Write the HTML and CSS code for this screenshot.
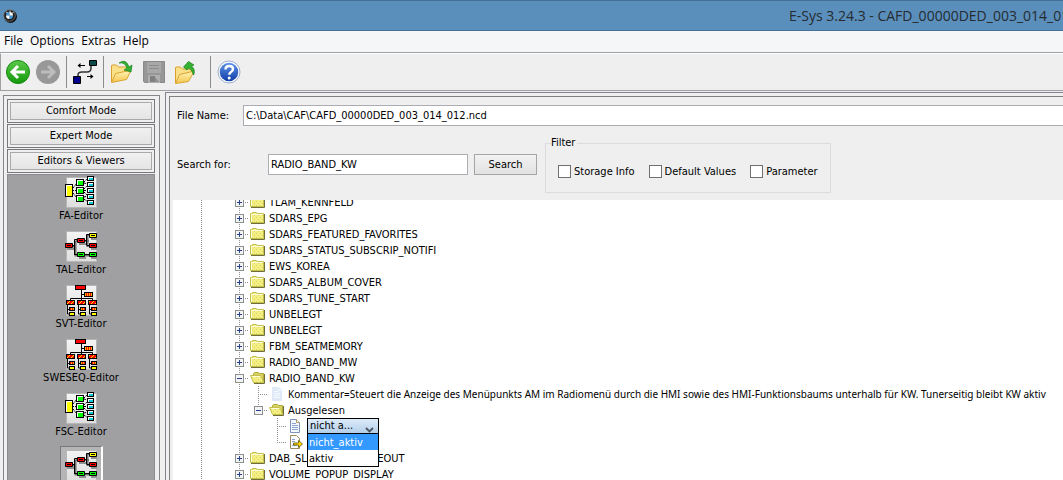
FILE: index.html
```html
<!DOCTYPE html>
<html lang="en">
<head>
<meta charset="utf-8">
<title>E-Sys 3.24.3</title>
<link rel="stylesheet" href="styles.css">
</head>
<body>
<svg class="defs" aria-hidden="true">
  <defs>
    <linearGradient id="leaf" x1="0" y1="0" x2="0" y2="1"><stop offset="0" stop-color="#5cc84a"/><stop offset="1" stop-color="#149a0c"/></linearGradient>
    <linearGradient id="gold" x1="0" y1="0" x2="0" y2="1"><stop offset="0" stop-color="#fff3b8"/><stop offset="1" stop-color="#f5c64d"/></linearGradient>
    <linearGradient id="blue" x1="0" y1="0" x2="0" y2="1"><stop offset="0" stop-color="#5e92e8"/><stop offset="1" stop-color="#123ea8"/></linearGradient>
    <linearGradient id="tile" x1="0" y1="0" x2="0" y2="1"><stop offset="0" stop-color="#f4f4f4"/><stop offset="1" stop-color="#dedede"/></linearGradient>
    <pattern id="hatch" width="4" height="4" patternUnits="userSpaceOnUse"><rect width="4" height="4" fill="#f00"/><path d="M0 4L4 0M-1 1L1 -1M3 5L5 3" stroke="#ffe800" stroke-width="1"/></pattern>
    <pattern id="dots" width="2" height="2" patternUnits="userSpaceOnUse"><rect width="2" height="2" fill="#f5b400"/><rect width="1" height="2" fill="#f00"/></pattern>
    <pattern id="grain" width="4" height="4" patternUnits="userSpaceOnUse"><rect width="4" height="4" fill="#f3ef84"/><path d="M0 0h1v1H0zM2 2h1v1H2z" fill="#e2d45a"/></pattern>
  </defs>
  <symbol id="ed-fa" viewBox="0 0 34 34">
    <rect x="2.500" y="2.500" width="30" height="30" fill="url(#tile)" stroke="#b6b6b6"/>
    <path d="M8 15.500h5M9 13l4-5M9 18l4 5M20 7l4-4M20 8l4 1M20 15.500h4M20 14l4-4M20 22l4-1M20 24l4 3M20 17l4 4" stroke="#000" stroke-dasharray="2 1" fill="none"/>
    <rect x="1.500" y="9.500" width="7" height="12" fill="#ff0" stroke="#000"/>
    <path d="M2.500 21V10.500H8" stroke="#fff" fill="none"/>
    <g fill="#0f0" stroke="#000"><rect x="12.500" y="4.500" width="7" height="6"/><rect x="12.500" y="12.500" width="7" height="6"/><rect x="12.500" y="20.500" width="7" height="6"/></g>
    <path d="M13.500 10V5.500H19M13.500 18V13.500H19M13.500 26V21.500H19" stroke="#fff" fill="none"/>
    <g fill="#fff" stroke="#000"><rect x="23.500" y="1.500" width="6" height="4"/><rect x="23.500" y="7.500" width="6" height="4"/><rect x="23.500" y="13.500" width="6" height="4"/><rect x="23.500" y="19.500" width="6" height="4"/><rect x="23.500" y="25.500" width="6" height="4"/></g>
    <path d="M25 4h4M25 10h4M25 16h4M25 22h4M25 28h4" stroke="#12c8d4" stroke-width="2"/>
  </symbol>
  <symbol id="ed-tal" viewBox="0 0 34 34">
    <rect x="2.500" y="2.500" width="30" height="30" fill="url(#tile)" stroke="#b6b6b6"/>
    <path d="M9 17.500h3M11.500 12v14.500H14M11.500 12H14M21 12h4M23.500 6v11H26M23.500 6H26M21 26.500h5" stroke="#707070" stroke-width="2" fill="none"/>
    <path d="M8 16.500h3M10.500 25V10.500H13M10 25.500h3M20 11.500h3M22.500 16V5.500H25M20 25.500h5M22.500 16.500H25" stroke="#000" fill="none"/>
    <path d="M3 20h7M15 15h7M27 10h6M27 20h6M15 29h7M27 29h6" stroke="#909090" stroke-width="2"/>
    <g stroke="#000"><path d="M1.500 14.500h7v4h-7zM13.500 9.500h7v4h-7zM25.500 14.500h7v4h-7z" fill="#f00"/><path d="M25.500 4.500h7v4h-7z" fill="#ff0"/><path d="M13.500 23.500h7v4h-7zM25.500 23.500h7v4h-7z" fill="#0f0"/><path d="M3 16.500h4M15 11.500h4M27 6.500h4M27 16.500h4M15 25.500h4M27 25.500h4"/></g>
  </symbol>
  <symbol id="ed-svt" viewBox="0 0 34 34">
    <rect x="2.500" y="2.500" width="30" height="30" fill="url(#tile)" stroke="#b6b6b6"/>
    <path d="M17.500 7v11M17.500 11.500h4M6.500 18v-2.500h22V18M3.500 22v9H6M3.500 26.500H6M14.500 22v9H17M14.500 26.500H17M25.500 22v9H28M25.500 26.500H28" stroke="#000" fill="none"/>
    <rect x="11.500" y="2.500" width="10" height="4" fill="#f00" stroke="#000"/>
    <g fill="url(#dots)" stroke="#000"><rect x="20.500" y="9.500" width="8" height="4"/><rect x="5.500" y="24.500" width="5" height="3"/><rect x="16.500" y="24.500" width="5" height="3"/><rect x="27.500" y="24.500" width="5" height="3"/></g>
    <g fill="url(#hatch)" stroke="#000"><rect x="2.500" y="17.500" width="8" height="4"/><rect x="13.500" y="17.500" width="8" height="4"/><rect x="24.500" y="17.500" width="8" height="4"/></g>
    <g fill="#ff0" stroke="#000"><rect x="5.500" y="29.500" width="5" height="3"/><rect x="16.500" y="29.500" width="5" height="3"/><rect x="27.500" y="29.500" width="5" height="3"/></g>
  </symbol>
  <symbol id="folder" viewBox="0 0 15 14">
    <path d="M1 12.500h13.500V3" stroke="#6f6d38" fill="none"/>
    <path d="M.5 11.500v-9h1l1-1h4l1 1h6v9z" fill="url(#grain)" stroke="#c4c04c"/>
    <path d="M1.500 11V3.500H13" stroke="#fffde0" fill="none"/>
  </symbol>
  <symbol id="folder-open" viewBox="0 0 15 14">
    <path d="M3.500 10V2.500l1-1h4l1 1h4v9" fill="#d8d060" stroke="#b0aa3c"/>
    <path d="M14.500 3v9.500H4" stroke="#6f6d38" fill="none"/>
    <path d="M.5 4.500h9.500l1.500 1 2 6H3.500z" fill="url(#grain)" stroke="#c4c04c"/>
    <path d="M2 5.500h8" stroke="#fffde0"/>
  </symbol>
  <symbol id="page" viewBox="0 0 15 14">
    <path d="M2.500.5h6l3 3v10h-9z" fill="#f4f8ff" stroke="#7d93b8"/>
    <path d="M8.500.5v3h3" fill="#fff" stroke="#b99a55"/>
    <path d="M4 4.500h4M4 6.500h6M4 8.500h6M4 10.500h6" stroke="#8aa2cc"/>
  </symbol>
  <symbol id="page-faded" viewBox="0 0 15 14">
    <path d="M3 0h7l3 3v11H3z" fill="#dfe9f8"/>
    <path d="M9.500 0v3.500H13" fill="none" stroke="#f4f8ff"/>
    <path d="M5 4.500h4M5 6.500h6M5 8.500h6M5 10.500h6" stroke="#f6faff"/>
  </symbol>
  <symbol id="plus" viewBox="0 0 9 9"><rect x=".5" y=".5" width="8" height="8" fill="#f4f4f4" stroke="#8e8f8f"/><path d="M2 4.500h5M4.500 2v5" stroke="#28418c"/></symbol>
  <symbol id="minus" viewBox="0 0 9 9"><rect x=".5" y=".5" width="8" height="8" fill="#f4f4f4" stroke="#8e8f8f"/><path d="M2 4.500h5" stroke="#28418c"/></symbol>
</svg>

<header class="titlebar">
  <svg class="logo" viewBox="0 0 14 14" role="img" aria-label="BMW"><circle cx="7.500" cy="7.500" r="6.500" fill="#111"/><circle cx="6.500" cy="6.500" r="5.800" fill="#222" stroke="#777" stroke-width=".8"/><path d="M3 3l2 1M7 1.500v2M10.500 3L9 4.500" stroke="#ddd"/><path d="M6.500 6.500V3A3.500 3.500 0 0 0 3 6.500zM6.500 6.500V10A3.500 3.500 0 0 0 10 6.500z" fill="#3d9be0"/><path d="M6.500 6.500V3A3.500 3.500 0 0 1 10 6.500zM6.500 6.500V10A3.500 3.500 0 0 1 3 6.500z" fill="#fff"/></svg>
  <h1 class="caption">E-Sys 3.24.3 - CAFD_00000DED_003_014_012.ncd</h1>
</header>

<nav class="menubar">
  <button class="menu">File</button>
  <button class="menu">Options</button>
  <button class="menu">Extras</button>
  <button class="menu">Help</button>
</nav>

<div class="toolbar">
  <button class="tool" aria-label="Back"><svg viewBox="0 0 24 24"><circle cx="12" cy="12" r="11.500" fill="url(#leaf)" stroke="#138a10"/><path d="M19 12H7M12 6l-6 6 6 6" stroke="#fff" stroke-width="3" fill="none"/></svg></button>
  <button class="tool" aria-label="Forward" disabled><svg viewBox="0 0 24 24"><circle cx="12" cy="12" r="12" fill="#989898"/><path d="M5 12h12M12 6l6 6-6 6" stroke="#bcbcbc" stroke-width="3" fill="none"/></svg></button>
  <span class="sep"></span>
  <button class="tool" aria-label="Connect"><svg viewBox="0 0 24 24"><path d="M5 18v-3q0-3 4-3h5q4 0 4-4V6" stroke="#333" stroke-width="1.500" fill="none"/><path d="M16.500.5h7v5h-7z" fill="#0a4c4c" stroke="#000"/><path d="M.5 16.500h7v7h-7z" fill="#00008c" stroke="#000"/><path d="M6 5.500h6M14 16.500h5" stroke="#000"/><path d="M4.500 5.500l3-2.500v5zM20.500 16.500l-3-2.500v5z"/></svg></button>
  <span class="sep"></span>
  <div class="filegroup">
    <button class="tool" aria-label="Open"><svg viewBox="0 0 24 24"><path d="M1.500 22V6q0-1 1-1h4l2 2h9v4" fill="#fbe08a" stroke="#d9a12c"/><path d="M1.500 22.500l4-9 14-3 1 1-4 8z" fill="url(#gold)" stroke="#dba52e"/><path d="M9 3q7-5 10 4l3-2-1 7-7-2 3-2q-2-6-8-5z" fill="#35b030" stroke="#15801a" stroke-width=".7"/></svg></button>
    <button class="tool" aria-label="Save" disabled><svg viewBox="0 0 24 24"><path d="M1.500 1.500h21v21h-20l-1-1z" fill="#979797" stroke="#8a8a8a"/><path d="M5 2h14v11H5z" fill="#a8a8a8"/><path d="M7 5.500h10M7 8.500h10" stroke="#8c8c8c"/><path d="M6 15h12v8H6z" fill="#b0b0b0"/><path d="M8 16h5v6H8z" fill="#808080"/><path d="M13 22V17l4 5z" fill="#909090"/></svg></button>
    <button class="tool" aria-label="Export"><svg viewBox="0 0 24 24"><path d="M1.500 23V8q0-1 1-1h4l2 2h9v5" fill="#fbe08a" stroke="#d9a12c"/><path d="M1.500 23.500l4-9 13-3 1 1-5 9z" fill="url(#gold)" stroke="#dba52e"/><path d="M9.500 7l5-5.500L20 5l-2.500 1q4.500 4 2 9-1-5-5-7l-1.500 2z" fill="#35b030" stroke="#15801a" stroke-width=".7"/></svg></button>
  </div>
  <span class="sep"></span>
  <button class="tool" aria-label="Help"><svg viewBox="0 0 24 24"><circle cx="12" cy="12" r="11" fill="#fff" stroke="#9daed0"/><circle cx="12" cy="12" r="9.300" fill="url(#blue)"/><path d="M8.500 9.500q0-3.500 3.800-3.500 3.700 0 3.700 3 0 2-2 3-1.700 1-1.700 2.800" stroke="#fff" stroke-width="2.500" fill="none"/><circle cx="12.200" cy="18" r="1.500" fill="#fff"/></svg></button>
</div>

<main class="workspace">
  <aside class="sidebar">
    <button class="mode">Comfort Mode</button>
    <button class="mode">Expert Mode</button>
    <button class="mode">Editors &amp; Viewers</button>
    <div class="editors">
      <button class="editor"><svg><use href="#ed-fa"/></svg><span>FA-Editor</span></button>
      <button class="editor"><svg><use href="#ed-tal"/></svg><span>TAL-Editor</span></button>
      <button class="editor"><svg><use href="#ed-svt"/></svg><span>SVT-Editor</span></button>
      <button class="editor"><svg><use href="#ed-svt"/></svg><span>SWESEQ-Editor</span></button>
      <button class="editor"><svg><use href="#ed-fa"/></svg><span>FSC-Editor</span></button>
      <button class="editor active" aria-label="FDL-Editor"><svg><use href="#ed-tal"/></svg></button>
    </div>
  </aside>

  <section class="frame">
    <div class="panel">
      <form class="query">
        <div class="file-row">
          <label class="file-label" for="file">File Name:</label>
          <input class="field file" id="file" type="text" value="C:\Data\CAF\CAFD_00000DED_003_014_012.ncd">
        </div>
        <div class="search-row">
          <label class="search-label" for="search">Search for:</label>
          <input class="field search" id="search" type="text" value="RADIO_BAND_KW">
          <button class="go" type="button">Search</button>
          <fieldset class="filter">
            <legend>Filter</legend>
            <label class="check"><input type="checkbox">Storage Info</label>
            <label class="check"><input type="checkbox">Default Values</label>
            <label class="check"><input type="checkbox">Parameter</label>
          </fieldset>
        </div>
      </form>

      <div class="viewport">
        <ul class="tree">
          <li class="row"><i class="guide line"></i><i class="guide"></i><button class="guide line arm" aria-label="Expand"><svg><use href="#plus"/></svg></button><svg class="icon"><use href="#folder"/></svg>TLAM_KENNFELD</li>
          <li class="row"><i class="guide line"></i><i class="guide"></i><button class="guide line arm" aria-label="Expand"><svg><use href="#plus"/></svg></button><svg class="icon"><use href="#folder"/></svg>SDARS_EPG</li>
          <li class="row"><i class="guide line"></i><i class="guide"></i><button class="guide line arm" aria-label="Expand"><svg><use href="#plus"/></svg></button><svg class="icon"><use href="#folder"/></svg>SDARS_FEATURED_FAVORITES</li>
          <li class="row"><i class="guide line"></i><i class="guide"></i><button class="guide line arm" aria-label="Expand"><svg><use href="#plus"/></svg></button><svg class="icon"><use href="#folder"/></svg>SDARS_STATUS_SUBSCRIP_NOTIFI</li>
          <li class="row"><i class="guide line"></i><i class="guide"></i><button class="guide line arm" aria-label="Expand"><svg><use href="#plus"/></svg></button><svg class="icon"><use href="#folder"/></svg>EWS_KOREA</li>
          <li class="row"><i class="guide line"></i><i class="guide"></i><button class="guide line arm" aria-label="Expand"><svg><use href="#plus"/></svg></button><svg class="icon"><use href="#folder"/></svg>SDARS_ALBUM_COVER</li>
          <li class="row"><i class="guide line"></i><i class="guide"></i><button class="guide line arm" aria-label="Expand"><svg><use href="#plus"/></svg></button><svg class="icon"><use href="#folder"/></svg>SDARS_TUNE_START</li>
          <li class="row"><i class="guide line"></i><i class="guide"></i><button class="guide line arm" aria-label="Expand"><svg><use href="#plus"/></svg></button><svg class="icon"><use href="#folder"/></svg>UNBELEGT</li>
          <li class="row"><i class="guide line"></i><i class="guide"></i><button class="guide line arm" aria-label="Expand"><svg><use href="#plus"/></svg></button><svg class="icon"><use href="#folder"/></svg>UNBELEGT</li>
          <li class="row"><i class="guide line"></i><i class="guide"></i><button class="guide line arm" aria-label="Expand"><svg><use href="#plus"/></svg></button><svg class="icon"><use href="#folder"/></svg>FBM_SEATMEMORY</li>
          <li class="row"><i class="guide line"></i><i class="guide"></i><button class="guide line arm" aria-label="Expand"><svg><use href="#plus"/></svg></button><svg class="icon"><use href="#folder"/></svg>RADIO_BAND_MW</li>
          <li class="row"><i class="guide line"></i><i class="guide"></i><button class="guide line arm" aria-label="Collapse"><svg><use href="#minus"/></svg></button><svg class="icon"><use href="#folder-open"/></svg>RADIO_BAND_KW</li>
          <li class="row comment"><i class="guide line"></i><i class="guide"></i><i class="guide line"></i><i class="guide line arm"></i><svg class="icon"><use href="#page-faded"/></svg>Kommentar=Steuert die Anzeige des Menüpunkts AM im Radiomenü durch die HMI sowie des HMI-Funktionsbaums unterhalb für KW. Tunerseitig bleibt KW aktiv</li>
          <li class="row"><i class="guide line"></i><i class="guide"></i><i class="guide line"></i><button class="guide end" aria-label="Collapse"><svg><use href="#minus"/></svg></button><svg class="icon"><use href="#folder-open"/></svg>Ausgelesen</li>
          <li class="row"><i class="guide line"></i><i class="guide"></i><i class="guide line"></i><i class="guide"></i><i class="guide line arm"></i><svg class="icon"><use href="#page"/></svg>
            <div class="combo">
              <select class="value" aria-label="Wert"><option>nicht a...</option><option>aktiv</option></select>
              <svg class="chevron" viewBox="0 0 9 6"><path d="M1 1l3.500 3.500L8 1" fill="none" stroke="#4c535c" stroke-width="1.800"/></svg>
              <ul class="popup" role="listbox" aria-label="Wert">
                <li class="choice picked" role="option" aria-selected="true">nicht_aktiv</li>
                <li class="choice" role="option" aria-selected="false">aktiv</li>
              </ul>
            </div>
          </li>
          <li class="row"><i class="guide line"></i><i class="guide"></i><i class="guide line"></i><i class="guide"></i><i class="guide end"></i><svg class="icon" viewBox="0 0 15 14"><path d="M2.500.5h6l3 3v10h-9z" fill="#f8faff" stroke="#9b8a5c"/><path d="M4 4.500h3M4 6.500h3M4 10.500h5" stroke="#8aa2cc"/><path d="M5.500 8h5V5.500L14.500 9l-4 3.500V10h-5z" fill="#ffd900" stroke="#5e5000" stroke-width=".8"/></svg></li>
          <li class="row"><i class="guide line"></i><i class="guide"></i><button class="guide line arm" aria-label="Expand"><svg><use href="#plus"/></svg></button><svg class="icon"><use href="#folder"/></svg>DAB_SLIDESHOW_TIMEOUT</li>
          <li class="row"><i class="guide line"></i><i class="guide"></i><button class="guide line arm" aria-label="Expand"><svg><use href="#plus"/></svg></button><svg class="icon"><use href="#folder"/></svg>VOLUME_POPUP_DISPLAY</li>
        </ul>
      </div>
    </div>
  </section>
</main>
</body>
</html>
```
FILE: styles.css
```css
* { box-sizing: border-box; }

body {
  margin: 0;
  height: 100vh;
  display: flex;
  flex-direction: column;
  overflow: hidden;
  background: #efefef;
  color: #000;
  font: 11px/14px "DejaVu Sans Condensed", "Noto Sans", sans-serif;
}

button, input, select { font: inherit; color: inherit; margin: 0; }
button { padding: 0; border: 0; background: none; }
ul { list-style: none; margin: 0; padding: 0; }
svg { display: block; }
.defs { position: absolute; width: 0; height: 0; }

/* Title and menus */
.titlebar {
  flex: none;
  display: flex;
  align-items: center;
  height: 31px;
  padding-left: 3px;
  background: #5a8fbc;
  border-top: 1px solid #446f98;
  border-bottom: 1px solid #42709b;
}
.logo { width: 14px; height: 14px; }
.caption {
  margin: 0 0 0 auto;
  width: 274px;
  overflow: hidden;
  white-space: nowrap;
  color: #262b30;
  font: 14px/20px "Open Sans", "Noto Sans", sans-serif;
}
.menubar {
  flex: none;
  display: flex;
  gap: 7px;
  height: 22px;
  padding: 0 4px 1px;
  background: #f5f6f8;
  border-bottom: 1px solid #a0a0a0;
}
.menu { font: 12px/20px "Open Sans", "Noto Sans", sans-serif; }

/* Toolbar */
.toolbar {
  flex: none;
  display: flex;
  align-items: center;
  gap: 6px;
  height: 38px;
  padding-left: 5px;
  border-top: 1px solid #fff;
  border-left: 1px solid #a0a0a0;
  border-bottom: 1px solid #a0a0a0;
}
.tool svg { width: 24px; height: 24px; }
.sep { width: 1px; height: 32px; background: #8c8c8c; }
.filegroup { display: flex; gap: 8px; padding-right: 6px; }

/* Work area */
.workspace {
  flex: 1;
  min-height: 0;
  display: flex;
  gap: 5px;
  padding-left: 3px;
}
.sidebar {
  flex: none;
  width: 157px;
  margin-top: 4px;
  padding: 3px 4px 0 3px;
  display: flex;
  flex-direction: column;
  gap: 1px;
  border: 1px solid #85868b;
  border-bottom: 0;
}
.mode {
  flex: none;
  height: 24px;
  padding: 2px;
  border: 1px solid #77787c;
  background: linear-gradient(#f1f1f1, #e4e4e4) content-box;
  outline: 1px solid #a9a9ab;
  outline-offset: -4px;
}
.editors {
  flex: 1;
  min-height: 0;
  overflow: hidden;
  display: flex;
  flex-direction: column;
  align-items: center;
  border: 1px solid #8a8b90;
  border-bottom: 0;
  background: #a0a0a2;
}
.editor {
  flex: none;
  height: 54px;
  display: flex;
  flex-direction: column;
  align-items: center;
}
.editor svg { width: 34px; height: 34px; }
.active {
  margin-top: 1px;
  padding: 1px 3px 0;
  border: 1px solid #77787c;
  border-right: 2px solid #fff;
  background: #b5b5b5;
}

.frame {
  flex: 1;
  min-width: 0;
  margin-top: 1px;
  padding: 3px 0 0 3px;
  border-top: 1px solid #7f8490;
  border-left: 1px solid #7f8490;
}
.panel {
  height: 100%;
  display: flex;
  flex-direction: column;
  padding-left: 3px;
  border-top: 1px solid #808083;
  border-left: 1px solid #808083;
}

/* Search form */
.query {
  flex: none;
  display: flex;
  flex-direction: column;
  gap: 8px;
  padding: 8px 0 6px 4px;
}
.file-row, .search-row { display: flex; align-items: center; }
.file-label { flex: none; width: 66px; }
.search-label { flex: none; width: 91px; padding-top: 2px; }
.field {
  height: 21px;
  padding: 0 2px;
  border: 1px solid #abadb3;
  background: #fff;
}
.file { flex: 1; min-width: 0; border-right: 0; }
.search { width: 200px; }
.go {
  width: 63px;
  height: 21px;
  margin: 0 8px 0 6px;
  padding-top: 1px;
  border: 1px solid #a5a5a5;
  background: linear-gradient(#f2f2f2, #e2e2e2);
}
.filter {
  display: flex;
  gap: 14px;
  height: 57px;
  margin: 2px 0 1px;
  padding: 15px 12px 0;
  border: 1px solid #dcdcdc;
}
.filter legend { margin-left: -7px; padding: 0 2px 0 0; }
.check { display: flex; gap: 3px; height: 14px; }
.check input {
  appearance: none;
  width: 13px;
  height: 13px;
  border: 1px solid #707070;
  background: #fff;
}

/* Tree */
.viewport { flex: 1; min-height: 0; overflow: hidden; background: #fff; }
.tree { margin-top: -6px; padding-left: 19px; }
.row { display: flex; align-items: flex-start; height: 16px; line-height: 18px; white-space: nowrap; }
.comment { font-family: "Noto Sans", "Open Sans", sans-serif; font-size: 10px; line-height: 16px; }
.guide {
  flex: none;
  width: 19px;
  height: 16px;
  display: grid;
  place-items: center;
  background-repeat: no-repeat;
}
.guide svg { width: 9px; height: 9px; }
.line {
  background-image: repeating-linear-gradient(#909090 0 1px, transparent 1px 2px);
  background-size: 1px 16px;
  background-position: 9px 0;
}
.arm, .end {
  background-image:
    repeating-linear-gradient(#909090 0 1px, transparent 1px 2px),
    repeating-linear-gradient(90deg, #909090 0 1px, transparent 1px 2px);
  background-size: 1px 16px, 10px 1px;
  background-position: 9px 0, 9px 8px;
}
.end { background-size: 1px 9px, 10px 1px; }
.icon { flex: none; width: 15px; height: 14px; margin: 1px 4px 0 1px; }

.combo { position: relative; width: 72px; height: 16px; }
.value {
  appearance: none;
  display: block;
  width: 100%;
  height: 16px;
  padding: 0 0 0 2px;
  border: 1px solid #000;
  border-radius: 0;
  background: linear-gradient(#dcebfa, #b4cfea);
  line-height: 14px;
}
.chevron { position: absolute; right: 5px; bottom: 1px; width: 9px; height: 6px; }
.popup {
  position: absolute;
  top: 100%;
  left: 0;
  width: 100%;
  border: 1px solid #000;
  border-top: 0;
  background: #fff;
}
.choice { height: 16px; line-height: 18px; padding-left: 1px; }
.picked { background: #39f; color: #fff; }
```
